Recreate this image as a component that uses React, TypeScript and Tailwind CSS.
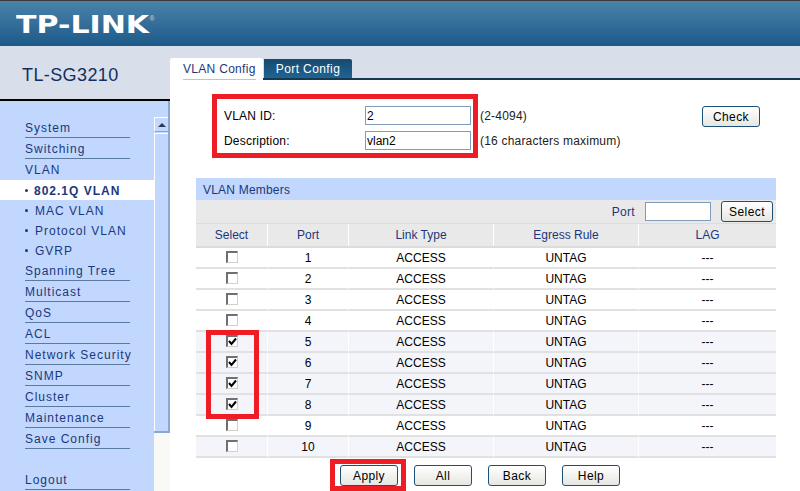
const navTop = ["System", "Switching"]
const navBottom = ["Spanning Tree", "Multicast", "QoS", "ACL", "Network Security", "SNMP", "Cluster", "Maintenance", "Save Config"]
const subItems = ["MAC VLAN", "Protocol VLAN", "GVRP"]
const checkedPorts = [5, 6, 7, 8]
const shadedPorts = [5, 6, 7, 8, 10]
const ports = [1, 2, 3, 4, 5, 6, 7, 8, 9, 10]
const cols = "grid grid-cols-[72px_81px_145px_145px_137px]"

function NavItem({ label }: { label: string }) {
  return (
    <div className="ml-[25px] w-[105px] h-[21px] border-b border-[#5b7a9f] flex items-end pb-[1px] text-[12px] leading-[16px] tracking-[1px] text-[#1b377c] whitespace-nowrap">
      {label}
    </div>
  )
}

function SubItem({ label }: { label: string }) {
  return (
    <div className="h-[20px] pl-[25px] pt-[1px] flex items-center gap-[7px] text-[12px] tracking-[1px] text-[#1b377c] whitespace-nowrap">
      <span className="w-[3px] h-[3px] rounded-full bg-[#1b377c]" />
      {label}
    </div>
  )
}

function Btn({ label, className = "" }: { label: string; className?: string }) {
  return (
    <button className={`h-[21px] rounded-[3px] border border-[#1d5079] bg-gradient-to-b from-white to-[#e6e6e2] text-[12px] tracking-[0.4px] text-black ${className}`}>
      {label}
    </button>
  )
}

function Checkbox({ checked }: { checked: boolean }) {
  return (
    <span className="relative block -mt-[1px] w-[12px] h-[12px] bg-white border-2 border-l-[#707070] border-t-[#707070] border-r-[#d4d0c8] border-b-[#d4d0c8] border-r-[1px] border-b-[1px]">
      {checked && (
        <svg viewBox="0 0 9 9" className="absolute left-0 top-0 w-[9px] h-[9px]">
          <path d="M1 4 L3.5 7 L8 1.5" fill="none" stroke="#000" strokeWidth="2" />
        </svg>
      )}
    </span>
  )
}

function HeadCell({ label, last }: { label: string; last?: boolean }) {
  return (
    <div className={`flex items-center justify-center h-[22px] text-[#1b377c] ${last ? "" : "border-r border-white"}`}>
      {label}
    </div>
  )
}

function Cell({ children, last }: { children: React.ReactNode; last?: boolean }) {
  return (
    <div className={`flex items-center justify-center h-[21px] border-b-[2px] border-[#e1e1e1] text-black ${last ? "" : "border-r border-r-white"}`}>
      {children}
    </div>
  )
}

export default function App() {
  return (
    <div className="relative w-[800px] h-[491px] overflow-hidden bg-white flex flex-col font-['Liberation_Sans',Arial,sans-serif] text-[12px]">
      {/* Header */}
      <header className="h-[46px] shrink-0 border-t border-[#3a3a3a] bg-gradient-to-b from-[#4a82a8] to-[#1c5a8a] flex items-start pl-[16px] pt-[10px]">
        <span className="origin-left scale-x-[1.25] font-['DejaVu_Sans',sans-serif] font-bold text-[24px] leading-[28px] text-white whitespace-nowrap">
          TP-LINK
        </span>
        <span className="ml-[27px] mt-[4px] text-[7px] leading-[8px] text-[#c5d3df]">®</span>
      </header>

      <div className="flex flex-1 min-h-0">
        {/* Left column */}
        <aside className="w-[170px] shrink-0 flex flex-col">
          <div className="h-[55px] shrink-0 bg-[#d8dfea] border-b-2 border-black flex items-center pl-[22px] pt-[5px] text-[18px] tracking-[0.4px] text-[#12305e]">
            TL-SG3210
          </div>
          <div className="flex flex-1 min-h-0">
            <nav className="w-[154px] shrink-0 bg-[#c1d7fd] pt-[16px] flex flex-col">
              {navTop.map((n) => (
                <NavItem key={n} label={n} />
              ))}
              <div className="h-[21px] pl-[25px] flex items-center text-[12px] tracking-[1px] text-[#1b377c]">VLAN</div>
              <div className="h-[20px] bg-white pl-[25px] pt-[1px] flex items-center gap-[6px] font-bold tracking-[1px] text-[#1b377c]">
                <span className="w-[3px] h-[3px] rounded-full bg-[#1b377c]" />
                802.1Q VLAN
              </div>
              {subItems.map((n) => (
                <SubItem key={n} label={n} />
              ))}
              {navBottom.map((n) => (
                <NavItem key={n} label={n} />
              ))}
              <div className="h-[20px]" />
              <NavItem label="Logout" />
            </nav>
            {/* Scrollbar */}
            <div className="w-[16px] shrink-0 flex flex-col bg-[#f9f9f6]">
              <div className="h-[332px] border-r-2 border-[#8da6cf] bg-[#c1d7fd] flex flex-col border-b-2">
                <div className="mt-[16px] h-[15px] border-t border-l border-white bg-[#c6d8f8] border-b border-b-[#8da6cf] flex items-center justify-center">
                  <span className="w-0 h-0 border-x-[4px] border-x-transparent border-b-[4px] border-b-[#26385f]" />
                </div>
                <div className="mt-[1px] flex-1 border-l border-t border-white" />
              </div>
            </div>
          </div>
        </aside>

        {/* Main */}
        <main className="flex-1 min-w-0 flex flex-col">
          <div className="h-[34px] shrink-0 bg-[#d8dfea] flex items-end border-b-2 border-[#18384f]">
            <div className="relative -mb-[2px] w-[93px] h-[22px] bg-white rounded-t-[3px] text-[#1b377c] text-[12px] tracking-[0.3px] pl-[13px] pt-[2px]">
              <span className="inline-block border-b border-[#b8c4d2] h-[18px] leading-[15px]">VLAN Config</span>
            </div>
            <div className="ml-[1px] w-[88px] h-[19px] pt-[1px] rounded-tr-[2px] bg-gradient-to-b from-[#174a6e] to-[#1f6494] text-white tracking-[0.4px] flex items-center justify-center">
              Port Config
            </div>
          </div>

          <div className="flex-1 pl-[26px] pt-[26px]">
            {/* VLAN form */}
            <div className="h-[72px] flex items-start">
              <div className="w-[139px] ml-[28px] flex flex-col text-black tracking-[0.2px]">
                <div className="h-[19px] pt-[1px] flex items-center">VLAN ID:</div>
                <div className="h-[6px]" />
                <div className="h-[19px] pt-[1px] flex items-center">Description:</div>
              </div>
              <div className="w-[106px] ml-[2px] flex flex-col gap-[6px]">
                <input readOnly value="2" className="h-[19px] w-full border border-[#7f9db9] px-[1px] text-[12px] text-black outline-none" />
                <input readOnly value="vlan2" className="h-[19px] w-full border border-[#7f9db9] px-[1px] text-[12px] text-black outline-none" />
              </div>
              <div className="w-[221px] ml-[9px] mr-[1px] flex flex-col gap-[6px] text-[#222] tracking-[0.2px]">
                <div className="h-[19px] pt-[1px] flex items-center">(2-4094)</div>
                <div className="h-[19px] pt-[1px] flex items-center whitespace-nowrap">(16 characters maximum)</div>
              </div>
              <Btn label="Check" className="w-[58px]" />
            </div>

            {/* VLAN Members table */}
            <div className="w-[580px] text-[12px]">
              <div className="h-[22px] bg-[#c1d7fd] pl-[7px] pt-[2px] flex items-center tracking-[0.2px] text-[#1b377c]">VLAN Members</div>
              <div className="h-[24px] bg-[#e9e9e9] border-b border-[#dcdcdc] flex items-center justify-end pr-[3px] text-[#1b377c] tracking-[0.3px]">
                <span>Port</span>
                <input readOnly value="" className="ml-[10px] w-[66px] h-[19px] border border-[#7f9db9] bg-white outline-none" />
                <Btn label="Select" className="ml-[10px] w-[52px]" />
              </div>
              <div className={`${cols} bg-[#e9e9e9] border-b-2 border-[#dcdcdc]`}>
                <HeadCell label="Select" />
                <HeadCell label="Port" />
                <HeadCell label="Link Type" />
                <HeadCell label="Egress Rule" />
                <HeadCell label="LAG" last />
              </div>
              <div className="border-l border-r border-[#e1e1e1]">
                {ports.map((p) => (
                  <div key={p} className={`${cols} -ml-px -mr-px ${shadedPorts.includes(p) ? "bg-[#f3f5fb]" : "bg-white"}`}>
                    <Cell>
                      <Checkbox checked={checkedPorts.includes(p)} />
                    </Cell>
                    <Cell>{p}</Cell>
                    <Cell>ACCESS</Cell>
                    <Cell>UNTAG</Cell>
                    <Cell last>---</Cell>
                  </div>
                ))}
              </div>
            </div>

            {/* Actions */}
            <div className="pl-[144px] pt-[7px] flex gap-[16px]">
              <Btn label="Apply" className="w-[58px]" />
              <Btn label="All" className="w-[58px]" />
              <Btn label="Back" className="w-[58px]" />
              <Btn label="Help" className="w-[58px]" />
            </div>
          </div>
        </main>
      </div>

      {/* Red annotation boxes drawn over the screenshot */}
      <div className="absolute left-[212px] top-[94px] w-[266px] h-[64px] border-[5px] border-[#ee1c25] pointer-events-none" />
      <div className="absolute left-[206px] top-[330px] w-[53px] h-[89px] border-[5px] border-[#ee1c25] pointer-events-none" />
      <div className="absolute left-[330px] top-[459px] w-[76px] h-[32px] border-[5px] border-[#ee1c25] pointer-events-none" />
    </div>
  )
}
